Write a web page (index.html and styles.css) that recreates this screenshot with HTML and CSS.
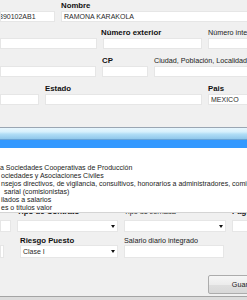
FILE: index.html
```html
<!DOCTYPE html>
<html lang="es">
<head>
    <meta charset="UTF-8">
    <title>Empleado</title>
    <link rel="stylesheet" href="styles.css">
</head>
<body>
    <div class="form">
        <div class="row r1">
            <div class="field w-rfc">
                <span class="lbl"></span>
                <div class="box"><span class="cut">890102AB1</span></div>
            </div>
            <div class="field w-nombre">
                <span class="lbl b">Nombre</span>
                <div class="box">RAMONA KARAKOLA</div>
            </div>
        </div>

        <div class="row r2">
            <div class="field w-calle">
                <span class="lbl"></span>
                <div class="box"></div>
            </div>
            <div class="field w-numext">
                <span class="lbl b shift">Número exterior</span>
                <div class="box"></div>
            </div>
            <div class="field w-numint">
                <span class="lbl">Número interior</span>
                <div class="box"></div>
            </div>
        </div>

        <div class="row r3">
            <div class="field w-colonia">
                <span class="lbl"></span>
                <div class="box"></div>
            </div>
            <div class="field w-cp">
                <span class="lbl b">CP</span>
                <div class="box"></div>
            </div>
            <div class="field w-ciudad">
                <span class="lbl">Ciudad, Población, Localidad</span>
                <div class="box"></div>
            </div>
        </div>

        <div class="row r4">
            <div class="field w-mun">
                <span class="lbl"></span>
                <div class="box"></div>
            </div>
            <div class="field w-estado">
                <span class="lbl b">Estado</span>
                <div class="box"></div>
            </div>
            <div class="field w-pais">
                <span class="lbl b">Pais</span>
                <div class="box">MEXICO</div>
            </div>
        </div>

        <div class="row r5">
            <div class="field w-fecha">
                <span class="lbl"></span>
                <div class="box"></div>
            </div>
            <div class="field w-contrato">
                <span class="lbl b">Tipo de Contrato</span>
                <div class="box combo"><span class="arrow"></span></div>
            </div>
            <div class="field w-jornada">
                <span class="lbl">Tipo de Jornada</span>
                <div class="box combo"><span class="arrow"></span></div>
            </div>
            <div class="field w-pago">
                <span class="lbl b">Pago</span>
                <div class="box"></div>
            </div>
        </div>

        <div class="row r6">
            <div class="field w-sbc">
                <span class="lbl"></span>
                <div class="box"></div>
            </div>
            <div class="field w-riesgo">
                <span class="lbl b">Riesgo Puesto</span>
                <div class="box combo">Clase I<span class="arrow"></span></div>
            </div>
            <div class="field w-sdi">
                <span class="lbl">Salario diario integrado</span>
                <div class="box"></div>
            </div>
        </div>

        <div class="btn">Guardar</div>
    </div>

    <div class="statusbar"></div>

    <!-- open list of the "Tipo de Régimen" combo, drawn over the form -->
    <div class="dropdown">
        <div class="dd-head"></div>
        <div class="dd-item sel"></div>
        <div class="dd-item"></div>
        <div class="dd-item"></div>
        <div class="dd-item flush">a Sociedades Cooperativas de Producción</div>
        <div class="dd-item">ociedades y Asociaciones Civiles</div>
        <div class="dd-item">nsejos directivos, de vigilancia, consultivos, honorarios a administradores, comisarios</div>
        <div class="dd-item indent">sarial (comisionistas)</div>
        <div class="dd-item">ilados a salarios</div>
        <div class="dd-item">es o títulos valor</div>
    </div>
</body>
</html>
```

FILE: styles.css
```css
body {
    margin: 0;
    width: 247px;
    height: 300px;
    overflow: hidden;
    position: relative;
    background-color: #f0f0f0;
    font-family: "Liberation Sans", Arial, sans-serif;
    color: #1b1b1b;
}

.form {
    padding-top: 1px;
}

.row {
    display: flex;
    gap: 6px;
    white-space: nowrap;
}

.field {
    flex: none;
}

.lbl {
    display: block;
    height: 9px;
    line-height: 9px;
    font-size: 7.2px;
    color: #222;
}

.lbl.b {
    font-weight: bold;
    font-size: 7.8px;
    color: #111;
}

.lbl.shift {
    margin-left: -2px;
}

.box {
    box-sizing: border-box;
    height: 11px;
    margin-top: 1px;
    padding-left: 2px;
    background-color: #fff;
    border: 1px solid #e6e6e6;
    font-size: 7px;
    line-height: 9px;
    overflow: hidden;
    color: #2a2a2a;
}

.cut {
    display: inline-block;
    margin-left: -4px;
}

.combo {
    display: flex;
    align-items: center;
    padding-right: 2px;
}

.arrow {
    margin-left: auto;
    width: 0;
    height: 0;
    border-left: 2.5px solid transparent;
    border-right: 2.5px solid transparent;
    border-top: 3px solid #111;
}

/* row spacing */
.r2 { margin-top: 6px; }
.r3 { margin-top: 7px; }
.r4 { margin-top: 7px; }

.r5 { margin-top: 102px; }
.r5 .box {
    height: 12px;
    margin-top: 4px;
}

.r6 { margin-top: 4px; }
.r6 .box {
    height: 13px;
    margin-top: 0;
}

/* field widths */
.w-rfc { width: 55px; }
.w-nombre { width: 200px; }

.w-calle { width: 97px; }
.w-numext { width: 99px; }
.w-numint { width: 60px; }

.w-colonia { width: 96px; }
.w-cp { width: 46px; }
.w-ciudad { width: 100px; }

.w-mun { width: 39px; }
.w-estado { width: 157px; }
.w-pais { width: 50px; }

.w-fecha { width: 11px; }
.w-contrato { width: 101px; }
.w-jornada { width: 102px; }
.w-pago { width: 30px; }

.w-sbc { width: 3px; }
.w-riesgo { width: 98px; margin-left: 11px; }
.w-sdi { width: 100px; }

.btn {
    box-sizing: border-box;
    width: 74px;
    height: 19px;
    margin: 17px 0 0 208px;
    border: 1px solid #acacac;
    border-radius: 2px;
    background: linear-gradient(#f6f6f6, #ececec 50%, #dfdfdf 50%, #d8d8d8);
    font-size: 7.2px;
    line-height: 17px;
    text-align: center;
    color: #1b1b1b;
}

.statusbar {
    margin-top: 2px;
    height: 4px;
    border-top: 1px solid #a4a4a4;
    background-color: #dcdcdc;
}

/* open combo list */
.dropdown {
    position: absolute;
    top: 127px;
    left: 0;
    right: 0;
    background-color: #fff;
    border-top: 1px solid #9aa6b3;
    border-bottom: 1px solid #d4d4d4;
}

.dd-head {
    box-sizing: border-box;
    height: 12px;
    background: linear-gradient(#e8f6fe 0%, #d6f0fc 35%, #b2def6 55%, #8fc7eb 100%);
    border-bottom: 1px solid #6aa3d4;
}

.dd-item {
    height: 8px;
    line-height: 8px;
    padding-left: 1px;
    font-size: 7px;
    white-space: nowrap;
    overflow: hidden;
    color: #222;
}

.dd-item.sel {
    background-color: #3399ff;
}

.dd-item.flush {
    padding-left: 0;
}

.dd-item.indent {
    padding-left: 4px;
}
```
